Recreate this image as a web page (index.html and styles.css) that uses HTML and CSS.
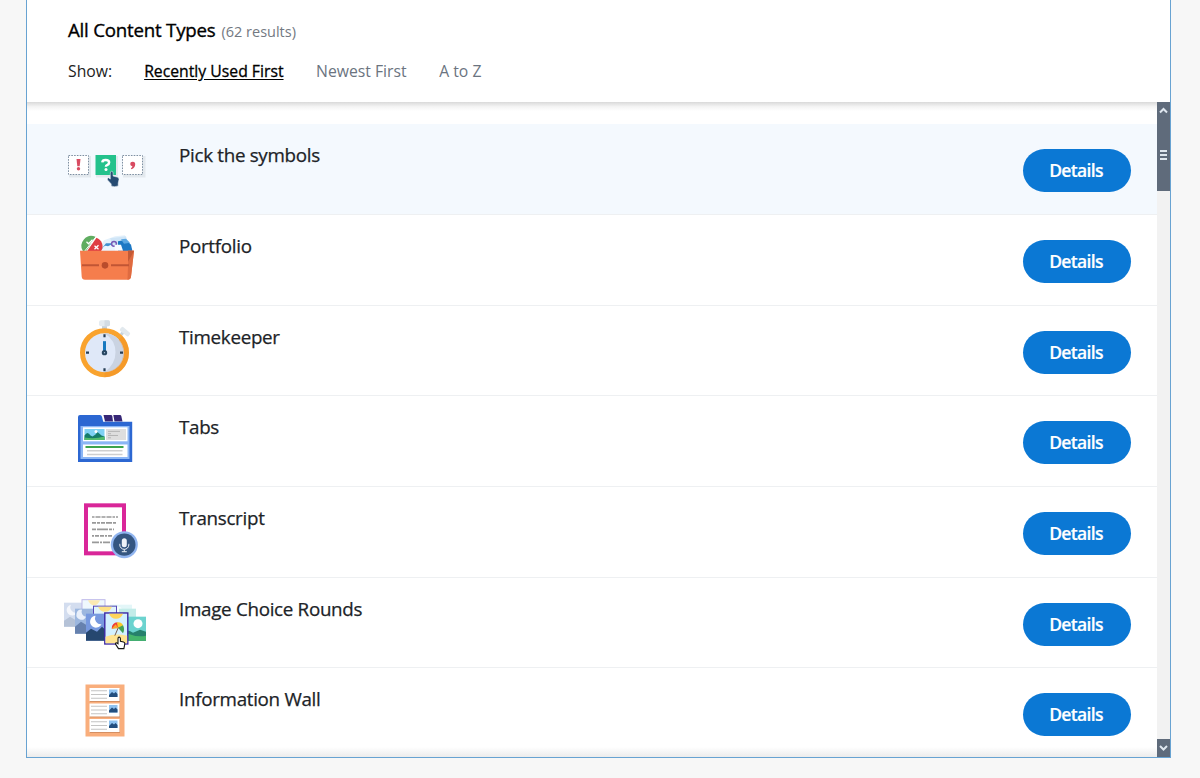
FILE: index.html
```html
<!DOCTYPE html>
<html lang="en">
<head>
<meta charset="utf-8">
<title>Content Types</title>
<link rel="stylesheet" href="styles.css">
</head>
<body>
<main class="panel">
  <header class="header">
    <div class="heading"><h1 class="title">All Content Types</h1><span class="count">(62 results)</span></div>
    <nav class="sort"><span class="sort-label">Show:</span><a class="sort-item active">Recently Used First</a><a class="sort-item newest">Newest First</a><a class="sort-item az">A to Z</a></nav>
  </header>
  <div class="body">
    <ul class="list">
      <li class="row selected">
        <svg class="icon" viewBox="60 124 95 90">
          <g fill="#e3e9ee"><rect x="69" y="156" width="22" height="21.500"/><rect x="96" y="156" width="22" height="21.500"/><rect x="123" y="156" width="22.500" height="21.500"/></g>
          <g fill="#fff" stroke="#7d8fa1" stroke-width="1" stroke-dasharray="1.600 1.200"><rect x="68.500" y="155.500" width="20" height="19"/><rect x="122.500" y="155.500" width="20" height="19"/></g>
          <rect x="95.500" y="155" width="20.500" height="20" fill="#24c28c"/>
          <path d="M76.500 159h4l-.8 7.300h-2.400z" fill="#d84b61"/><circle cx="78.500" cy="168.700" r="1.700" fill="#d84b61"/>
          <path d="M102.300 162.300q.2-2.200 3.300-2.200 3.500 0 3.500 2.400 0 1.500-1.700 2.300-1.500.6-1.500 1.900" fill="none" stroke="#fff" stroke-width="2.500"/><circle cx="106" cy="169.600" r="1.500" fill="#fff"/>
          <path d="M132.700 161.700a2.400 2.400 0 0 1 2.500 2.500q0 3.500-3.800 5l-.5-1q1.500-.9 1.500-2-2.200-.3-2.200-2.100a2.400 2.400 0 0 1 2.500-2.400z" fill="#d84b61"/>
          <path d="M110.300 173q0-1.700 1.300-1.700t1.500 1.600v3.200l4.500 1.100q1.600.6 1.400 2.200l-.8 3.700v2.800q-4 1.600-7 0v-2l-3.700-4q-.6-1.900 1-2.100l1.800 1.300z" fill="#264b72" stroke="#f5faff" stroke-width=".5"/>
        </svg>
        <h2 class="name">Pick the symbols</h2><button class="details">Details</button>
      </li>
      <li class="row">
        <svg class="icon" viewBox="60 214.670 95 90">
          <path d="M104 240l11-4 10-1 4 14H99z" fill="#e4f1fb"/><path d="M110 238l16-2 3 12h-14z" fill="#cfe5f7"/>
          <path d="M118 241l8-1.500 5 5 1.500 6.500H118z" fill="#1d78c4"/><path d="M121 239l5-.5 4 4-6 1z" fill="#5ba7e2"/>
          <path d="M102 248l4-5 5 0 6 8H102z" fill="#3f90d0"/><path d="M102 249q2-5 6-3l4-2 5 3v4H102z" fill="#eaf5ff"/>
          <circle cx="114" cy="243.500" r="2.400" fill="none" stroke="#7758b5" stroke-width="1.500"/><path d="M114.500 244.500h6.500l2 6h-8z" fill="#f7fbff"/>
          <path d="M83 251a10 10 0 0 1 12.500-14.500L86 251z" fill="#60ad61"/><path d="M96.500 237.500A9 9 0 0 1 101 251H87z" fill="#df3e43"/><path d="M84.500 251l12-15" stroke="#fff" stroke-width="1"/>
          <path d="M86.500 241.500l2 2 4-4M94.500 245.500l4 3.500m0-4l-4 4" fill="none" stroke="#fff" stroke-width="1.300"/>
          <path d="M80 250.500h54l-3 26q-.3 3-3.500 3H85q-3 0-3.300-3z" fill="#f57d4c"/><path d="M128.500 250.500h5.500l-3 26q-.5 3-3.500 3z" fill="#df6b40"/><path d="M128 250.500h6l-2 4-4 7z" fill="#c45a36"/>
          <path d="M82 264.800h17m12 0h18" stroke="#c15534" stroke-width="2"/><circle cx="105" cy="265" r="3.300" fill="#b94c2c"/>
        </svg>
        <h2 class="name">Portfolio</h2><button class="details">Details</button>
      </li>
      <li class="row">
        <svg class="icon" viewBox="60 305.330 95 90">
          <rect x="102" y="324" width="5" height="5" fill="#c3cfda"/><rect x="99" y="319.500" width="11" height="6" rx="2" fill="#e4ebf1"/><path d="M104.500 319.500h4q1.500 0 1.500 2v2q0 2-1.500 2h-4z" fill="#d2dce5"/>
          <path d="M121 334l4-4" stroke="#c8d4dd" stroke-width="3"/><rect x="119.500" y="328.600" width="11" height="4.800" rx="1.500" transform="rotate(40 125 331)" fill="#e2e9ee"/>
          <circle cx="104.500" cy="352" r="22" fill="#dfe8f8" stroke="#f9a32e" stroke-width="5"/>
          <path d="M104.500 371.500q11-8 11-20t-11-19a19.500 19.500 0 0 1 0 39z" fill="#cad3e2"/>
          <path d="M104.500 376.500a24.500 24.500 0 0 0 18-41l-4 3.500a19.500 19.500 0 0 1-14 32.500z" fill="#f08c23" opacity=".4"/>
          <path d="M104.500 333.500v3m0 31v3M86 352h3m31 0h3" stroke="#263e55" stroke-width="2.200"/>
          <path d="M104.500 352v-11.500" stroke="#1678bf" stroke-width="3"/><circle cx="104.500" cy="352" r="2.700" fill="#284762"/><circle cx="104.500" cy="352" r=".7" fill="#aac7df"/>
        </svg>
        <h2 class="name">Timekeeper</h2><button class="details">Details</button>
      </li>
      <li class="row">
        <svg class="icon" viewBox="60 396 95 90">
          <path d="M103.500 415h7.500q1 0 1.300 1l.7 5.500h-8zM113.300 415h6.700q1 0 1.300 1l1.200 5.500h-8z" fill="#372776"/>
          <path d="M78 462v-45q0-2 2-2h20q1.500 0 2 1.800l1.200 5h29V462z" fill="#2c67d2"/><rect x="80.500" y="426" width="49" height="33" fill="#8bb6f5"/>
          <g fill="#fff"><rect x="83" y="427.300" width="44.500" height="14"/><rect x="83" y="444.500" width="44.500" height="12.500"/></g>
          <rect x="84.500" y="429" width="20" height="11" fill="#7fd1f3"/><path d="M84.500 435.500q3-5 6 0l2 1 3-2 2-2.500 4 3.500 3 1v3.500h-20z" fill="#147c69"/><path d="M84.500 437.500q10 2 20-1v3.500h-20z" fill="#54bc6d"/><circle cx="96" cy="431.500" r="1.500" fill="#fff"/>
          <rect x="106" y="429" width="20" height="11" fill="#dedede"/><path d="M108 431.400h12m-12 2.300h3m-3 1.800h10m-10 2.300h3" stroke="#aaa" stroke-width=".8"/>
          <path d="M85.500 447h38" stroke="#3ca34d" stroke-width="2"/><path d="M87 450.800h35.500m-35.500 3.700h35.500" stroke="#cfcfcf" stroke-width="1.500"/>
        </svg>
        <h2 class="name">Tabs</h2><button class="details">Details</button>
      </li>
      <li class="row">
        <svg class="icon" viewBox="60 486.670 95 90">
          <rect x="86" y="505" width="38" height="48" fill="#fff" stroke="#d92699" stroke-width="4"/>
          <g stroke="#999" stroke-width="1.600"><path d="M92 516.700h26" stroke-dasharray="2.500 1 5 1 4 1 5 1"/><path d="M92 522.500h24" stroke-dasharray="4 1 3 1 4 1 6 1 3 1"/><path d="M92 529h22" stroke-dasharray="4 1 11 1 3 1"/><path d="M92 535.500h20" stroke-dasharray="2 1 4 1 4 1"/><path d="M92 542h18" stroke-dasharray="7 1 2 1 9 1"/></g>
          <circle cx="124.300" cy="544.300" r="13.500" fill="#91b5f0"/><circle cx="124.300" cy="544.300" r="11.200" fill="#355681"/>
          <rect x="121.800" y="538" width="5" height="9" rx="2.500" fill="#eef2f8"/><path d="M119.800 543.500v1a4.500 4.500 0 0 0 9 0v-1M124.300 549v2.200m-2.500.2h5" fill="none" stroke="#eef2f8" stroke-width="1"/>
        </svg>
        <h2 class="name">Transcript</h2><button class="details">Details</button>
      </li>
      <li class="row">
        <svg class="icon" viewBox="60 577.330 95 90">
          <rect x="64" y="602" width="24" height="24" fill="#d3ddef"/><path d="M64 620l6-4 5 3 4-3 9 6v4H64z" fill="#b5c2d7"/><path d="M71 604a5.500 5.500 0 1 0 6 8 5.500 5.500 0 0 1-6-8z" fill="#f5f7fc"/>
          <rect x="82" y="599" width="23" height="31" fill="#eff8fd" stroke="#bfb9ea"/><path d="M88 599.500h12q-2 5-6 5t-6-5z" fill="#fce9b2"/>
          <rect x="110" y="604" width="22" height="22" fill="#e3f6f8"/><circle cx="118" cy="610" r="4" fill="#f7fdfd"/>
          <rect x="75" y="608" width="24" height="25" fill="#9cb7df"/><path d="M75 626l6-5 5 3 5-4 8 6v7H75z" fill="#6681ae"/><path d="M82 609a5 5 0 1 0 4 7 5 5 0 0 1-4-7z" fill="#e9f0fb"/>
          <rect x="93.500" y="605.500" width="23" height="31" fill="#dff3fc" stroke="#5748b8"/><path d="M98 606h14q-2 5-7 5t-7-5z" fill="#ffe286"/><rect x="119" y="608" width="17" height="22" fill="#c3ece9"/>
          <rect x="86" y="613" width="25" height="27" fill="#7799df"/><path d="M86 632l5-4 6 3 5-5 9 8v6H86z" fill="#26476f"/><path d="M95.500 615a6 6 0 1 0 6 8.500 6 6 0 0 1-6-8.500z" fill="#fff"/>
          <rect x="124" y="616" width="22" height="24" fill="#6cd3cf"/><circle cx="138" cy="623" r="4.500" fill="#fff"/><path d="M124 630q5-1 9 2l7-3 6 2v9h-22z" fill="#26806c"/><path d="M128 633q10 4 18 2v5h-18z" fill="#45b56b"/>
          <rect x="104.800" y="612.300" width="23" height="31" fill="#d3f1ff" stroke="#3d28a4" stroke-width="1.400"/><path d="M109 613h14q-2 5-7 5t-7-5z" fill="#ffd45a"/><path d="M105.500 636q10-4 21.600-1v7.500h-21.600z" fill="#ffe491"/>
          <path d="M111.700 628q0-6 5.800-6.500l1 5z" fill="#ef3e37"/><path d="M117 621.800q4-1 6.200 3l-5.200 2.700z" fill="#fbc928"/><path d="M118 627l5-2.300q2.200 4 0 8z" fill="#43a154"/><path d="M111.700 628l4-4.500 2.500 4z" fill="#f5a92c"/><path d="M118.300 627l-3.500 8" stroke="#765c4d"/>
          <path d="M118 638q0-1.500 1.100-1.500t1.300 1.300v2.800l3.200.7q1.400.4 1.200 2l-.9 4.700h-5.400l-3-4.700q0-1.600 1.500-.9l1 .7z" fill="#fff" stroke="#151515" stroke-width="1.100"/>
        </svg>
        <h2 class="name">Image Choice Rounds</h2><button class="details">Details</button>
      </li>
      <li class="row">
        <svg class="icon" viewBox="60 668 95 90">
          <rect x="85.500" y="684.500" width="39" height="52" fill="#f9ae7c"/>
          <defs><g id="wall-card"><rect x="90" y="689" width="30" height="13" fill="#d58f62"/><rect x="89.500" y="688" width="30" height="13" fill="#fff"/><path d="M91 690.700h16m-16 3.800h16m-16 3.800h16" stroke="#c4c4c4" stroke-width="1.100"/><rect x="109" y="689.500" width="8.500" height="7.500" fill="#8fc2f0"/><path d="M109 695l3-3 2 1.500 1.500-1.500 2 2v3H109z" fill="#234e7e"/></g></defs>
          <use href="#wall-card"/><use href="#wall-card" y="15.500"/><use href="#wall-card" y="31"/>
        </svg>
        <h2 class="name">Information Wall</h2><button class="details">Details</button>
      </li>
    </ul>
    <div class="scrollbar">
      <div class="thumb">
        <svg class="up" viewBox="0 0 13 18"><path d="M3 10.500L6.500 7l3.500 3.500" fill="none" stroke="#dfe7ef" stroke-width="2"/></svg>
        <svg class="grip" viewBox="0 0 13 12"><path d="M3 2h7M3 6h7M3 10h7" stroke="#dfe7ef" stroke-width="2"/></svg>
      </div>
      <div class="down"><svg viewBox="0 0 13 18"><path d="M3 7l3.500 3.500L10 7" fill="none" stroke="#dfe7ef" stroke-width="2"/></svg></div>
    </div>
  </div>
</main>
</body>
</html>
```
FILE: styles.css
```css
* { box-sizing: border-box; }
body { margin: 0; background: #f7f7f7; font-family: "Open Sans", sans-serif; overflow: hidden; }
.panel { width: 1145px; height: 758px; margin-left: 26px; border: 1px solid #68a3d2; border-top: 0; background: #fff; display: flex; flex-direction: column; }
.header { height: 102px; flex: none; padding: 16px 41px 0; background: #fff; }
.heading { display: flex; align-items: baseline; height: 28px; line-height: 28px; }
.title { margin: 0; font-size: 18.700px; font-weight: 400; letter-spacing: -.22px; color: #000; -webkit-text-stroke: .35px #000; }
.count { margin-left: 6px; font-size: 14.500px; color: #737982; }
.sort { display: flex; height: 24px; margin-top: 16px; line-height: 23px; font-size: 15.750px; color: #222; }
.sort-item { color: #6b7480; }
.active { margin-left: 32px; color: #000; -webkit-text-stroke: .3px #000; text-decoration: underline; text-underline-offset: 2px; }
.newest, .az { margin-left: 32.500px; }
.body { flex: 1; min-height: 0; display: flex; overflow: hidden; position: relative; }
.body::before, .body::after { content: ""; position: absolute; left: 0; right: 13px; pointer-events: none; }
.body::before { top: 0; height: 9px; background: linear-gradient(#d9d9d9, #f3f3f3 50%, transparent); }
.body::after { bottom: 0; height: 10px; background: linear-gradient(transparent, #ececec); }
.list { list-style: none; margin: 0; padding: 22.250px 0 0; flex: 1; }
.row { display: flex; height: 90.670px; padding: 0 26.500px 0 33px; border-bottom: 1px solid #eef0f2; }
.selected { background: #f4f9fe; }
.icon { width: 95px; height: 90px; flex: none; }
.name { flex: 1; margin: 18px 0 0 24px; font-size: 18.800px; font-weight: 400; line-height: 26px; letter-spacing: -.3px; color: #202327; -webkit-text-stroke: .25px #202327; }
.details { width: 108px; height: 43px; margin-top: 25px; padding: 0 1px 0 0; border: 0; border-radius: 22px; background: #0b78d4; color: #fff; font: 600 17.500px/43px "Open Sans", sans-serif; letter-spacing: -.65px; -webkit-text-stroke: .2px #fff; }
.scrollbar { width: 13px; background: #f2f2f2; display: flex; flex-direction: column; justify-content: space-between; }
.thumb { height: 89px; background: #5f6b7b; display: flex; flex-direction: column; }
.up, .down svg { display: block; width: 13px; height: 18px; }
.grip { width: 13px; height: 12px; margin-top: 29px; }
.down { height: 18px; background: #5f6b7b; }
```
